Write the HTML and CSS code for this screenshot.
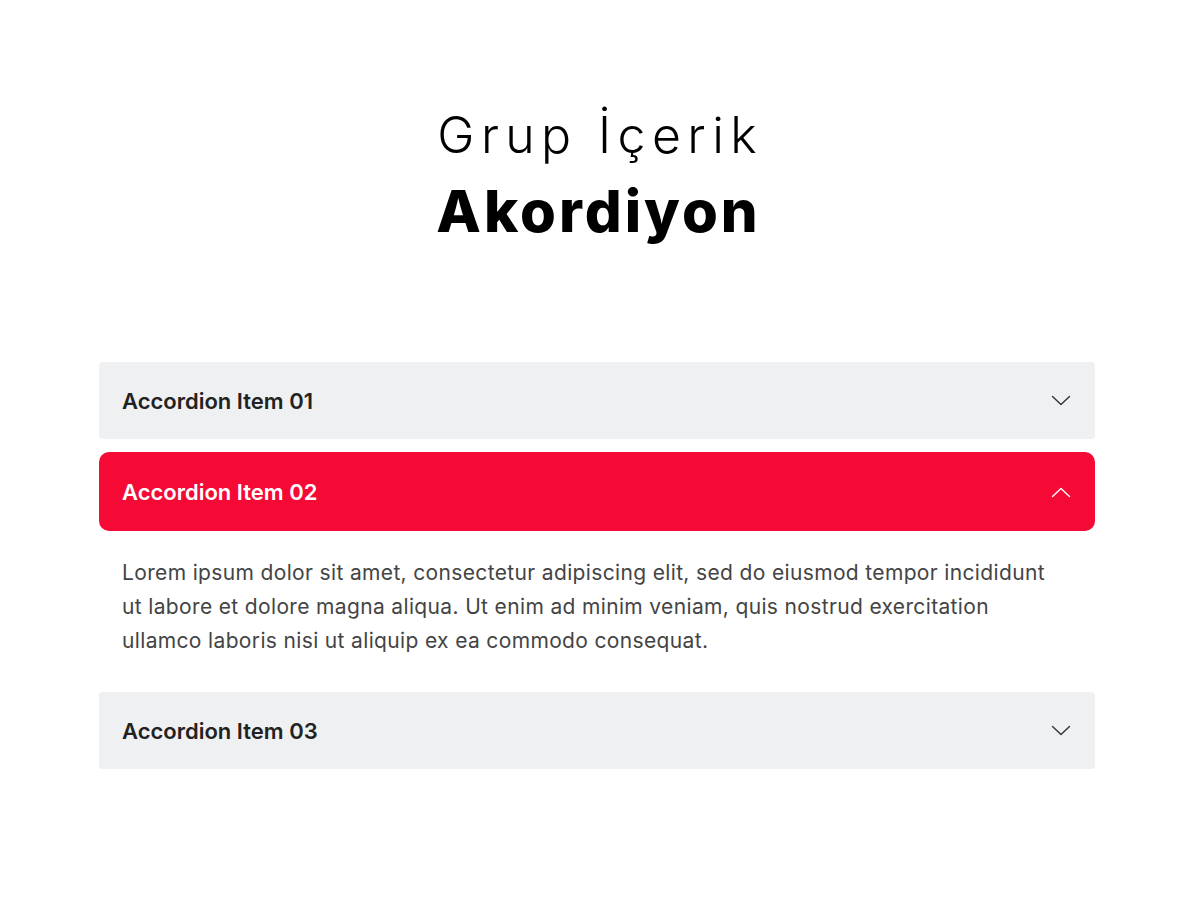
FILE: index.html
```html
<!DOCTYPE html>
<html lang="tr">
<head>
<meta charset="utf-8">
<title>Grup İçerik Akordiyon</title>
<link rel="stylesheet" href="styles.css">
</head>
<body>
<main class="page">
  <header class="intro">
    <h1 class="intro-title">
      <span class="intro-light">Grup İçerik</span>
      <span class="intro-bold">Akordiyon</span>
    </h1>
  </header>

  <section class="accordion">
    <div class="acc-item">
      <button class="acc-head" type="button">
        <span class="acc-label">Accordion Item 01</span>
        <svg class="acc-chevron" viewBox="0 0 20 12" width="20" height="12"><path d="M1.5 1.5 L10 9.5 L18.5 1.5" /></svg>
      </button>
    </div>

    <div class="acc-item is-open">
      <button class="acc-head" type="button">
        <span class="acc-label">Accordion Item 02</span>
        <svg class="acc-chevron" viewBox="0 0 20 12" width="20" height="12"><path d="M1.5 10.5 L10 2.5 L18.5 10.5" /></svg>
      </button>
      <div class="acc-body">
        <p>Lorem ipsum dolor sit amet, consectetur adipiscing elit, sed do eiusmod tempor incididunt ut labore et dolore magna aliqua. Ut enim ad minim veniam, quis nostrud exercitation ullamco laboris nisi ut aliquip ex ea commodo consequat.</p>
      </div>
    </div>

    <div class="acc-item">
      <button class="acc-head" type="button">
        <span class="acc-label">Accordion Item 03</span>
        <svg class="acc-chevron" viewBox="0 0 20 12" width="20" height="12"><path d="M1.5 1.5 L10 9.5 L18.5 1.5" /></svg>
      </button>
    </div>
  </section>
</main>
</body>
</html>
```

FILE: styles.css
```css
* {
  box-sizing: border-box;
}

html, body {
  margin: 0;
  padding: 0;
  background: #ffffff;
}

body {
  font-family: Inter, "Noto Sans", sans-serif;
  color: #222;
}

.page {
  width: 1200px;
  min-height: 900px;
  padding: 105px 105px 0 99px;
}

.intro {
  text-align: center;
}

.intro-title {
  margin: 0;
  display: flex;
  flex-direction: column;
  align-items: center;
  color: #000;
  font-family: Inter, "Noto Sans", sans-serif;
}

.intro-light {
  font-size: 50px;
  font-weight: 300;
  line-height: 60px;
  letter-spacing: 6.4px;
  margin-right: -6.4px;
}

.intro-bold {
  margin-top: 11px;
  font-size: 58px;
  font-weight: 800;
  line-height: 70px;
  letter-spacing: 3px;
  margin-right: -3px;
}

.accordion {
  margin-top: 116px;
  display: flex;
  flex-direction: column;
  gap: 13px;
}

.acc-head {
  width: 100%;
  height: 77px;
  display: flex;
  align-items: center;
  justify-content: space-between;
  padding: 0 24px 0 23px;
  border: 0;
  border-radius: 4px;
  background: #eff0f2;
  color: #222;
  font-family: Inter, "Noto Sans", sans-serif;
  font-size: 22px;
  font-weight: 600;
  cursor: pointer;
  text-align: left;
}

.acc-chevron {
  fill: none;
  stroke: #333;
  stroke-width: 1.4;
  stroke-linecap: round;
  stroke-linejoin: round;
}

.is-open .acc-head {
  height: 79px;
  background: #f50a36;
  color: #fff;
  border-radius: 10px;
}

.is-open .acc-chevron {
  stroke: #fff;
}

.acc-body {
  padding: 25px 30px 21px 23px;
}

.acc-body p {
  margin: 0;
  font-size: 21px;
  line-height: 34px;
  letter-spacing: 0.35px;
  color: #444;
}
```
